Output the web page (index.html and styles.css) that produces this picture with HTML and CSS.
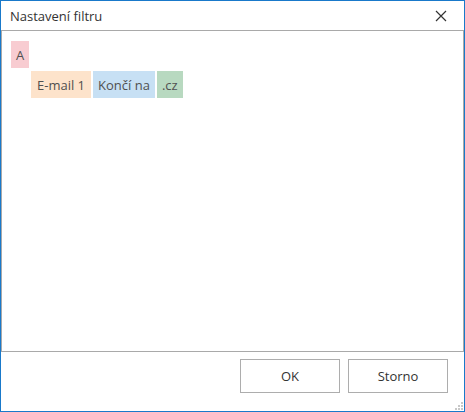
FILE: index.html
```html
<!DOCTYPE html>
<html>
<head>
<meta charset="utf-8">
<link rel="stylesheet" href="styles.css">
</head>
<body>
<div class="window">
  <div class="titlebar">
    <span class="title">Nastavení filtru</span>
    <svg class="close" width="12" height="12" viewBox="0 0 12 12"><path d="M1 1L11 11M11 1L1 11" stroke="#333" stroke-width="1.2" fill="none"/></svg>
  </div>
  <div class="panel">
    <div class="row"><span class="chip pink">A</span></div>
    <div class="row indent">
      <span class="chip peach field">E-mail 1</span>
      <span class="chip blue">Končí na</span>
      <span class="chip green">.cz</span>
    </div>
  </div>
  <div class="footer">
    <button class="btn">OK</button>
    <button class="btn">Storno</button>
  </div>
  <svg class="grip" width="8" height="8" viewBox="0 0 8 8" fill="#c8c8c8">
    <rect x="6" y="0" width="2" height="2"/>
    <rect x="3" y="3" width="2" height="2"/><rect x="6" y="3" width="2" height="2"/>
    <rect x="0" y="6" width="2" height="2"/><rect x="3" y="6" width="2" height="2"/><rect x="6" y="6" width="2" height="2"/>
  </svg>
</div>
</body>
</html>
```
FILE: styles.css
```css
html, body { margin: 0; padding: 0; }
body { width: 465px; height: 412px; background: #fff; font-family: "Open Sans", "Noto Sans", sans-serif; color: #444; }
.window { position: relative; box-sizing: border-box; width: 465px; height: 412px; border: 1px solid #1979ca; display: flex; flex-direction: column; background: #fff; }
.titlebar { height: 29px; display: flex; align-items: center; justify-content: space-between; padding: 0 17px 0 9px; }
.title { font-size: 13px; color: #333; }
.close { display: block; }
.panel { flex: 0 0 322px; box-sizing: border-box; border: 1px solid #a9a9a9; padding: 10px 9px; display: flex; flex-direction: column; gap: 3px; }
.row { display: flex; gap: 2px; }
.indent { padding-left: 20px; }
.chip { height: 27px; box-sizing: border-box; display: flex; align-items: center; padding: 0 5px; font-size: 13px; color: #505050; }
.chip.field { padding: 0 6px; }
.pink { background: #f8ccd1; }
.peach { background: #fde3cb; }
.blue { background: #c7e0f4; }
.green { background: #b8d9c0; }
.footer { flex: 1; display: flex; justify-content: flex-end; align-items: flex-start; gap: 8px; padding: 7px 16px 0 0; }
.btn { width: 100px; height: 34px; border: 1px solid #adadad; background: #fff; font-family: inherit; font-size: 13px; color: #333; padding: 0; }
.grip { position: absolute; right: 1px; bottom: 1px; }
```
